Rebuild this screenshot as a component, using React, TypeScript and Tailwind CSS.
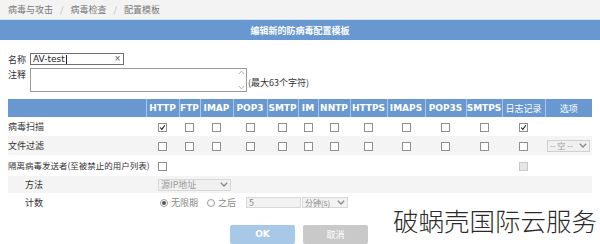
import React from 'react';

const protocols = ['HTTP', 'FTP', 'IMAP', 'POP3', 'SMTP', 'IM', 'NNTP', 'HTTPS', 'IMAPS', 'POP3S', 'SMTPS'];
const colWidths = [138, 33, 21, 33, 34, 31, 20, 32, 37, 38, 41, 36, 43, 47];

const rows = [
  { label: '病毒扫描', checks: [true, false, false, false, false, false, false, false, false, false, false], log: true, option: false, shade: false },
  { label: '文件过滤', checks: [false, false, false, false, false, false, false, false, false, false, false], log: false, option: true, shade: true },
];

function Box({ checked = false, disabled = false }: { checked?: boolean; disabled?: boolean }) {
  return (
    <span
      className={`inline-flex w-[9px] h-[9px] items-center justify-center border align-middle ${
        disabled ? 'border-[#c8c8c8] bg-[#e6e6e6]' : 'border-[#8f8f8f] bg-white'
      }`}
    >
      {checked && (
        <svg width="9" height="9" viewBox="0 0 9 9">
          <path d="M1.5 4.5 L3.6 6.8 L7.6 1.6" fill="none" stroke="#222" strokeWidth="1.4" />
        </svg>
      )}
    </span>
  );
}

function Chevron({ color = '#666' }: { color?: string }) {
  return (
    <svg width="8" height="5" viewBox="0 0 8 5">
      <path d="M0.8 0.8 L4 4 L7.2 0.8" fill="none" stroke={color} strokeWidth="1.3" />
    </svg>
  );
}

function Radio({ on = false }: { on?: boolean }) {
  return (
    <span className="inline-flex w-[8px] h-[8px] rounded-full border border-[#9a9a9a] bg-white items-center justify-center">
      {on && <span className="w-[4px] h-[4px] rounded-full bg-[#555]" />}
    </span>
  );
}

export default function App() {
  return (
    <div className="relative w-[600px] h-[244px] overflow-hidden bg-white text-[#333] font-['DejaVu_Sans','Noto_Sans_CJK_SC',sans-serif] text-[9px] leading-none">
      {/* Breadcrumb */}
      <div className="h-[19px] bg-[#f4f3f3] flex items-center gap-[7px] px-[8px] text-[#777] font-['Noto_Sans_CJK_SC',sans-serif]">
        <span>病毒与攻击</span>
        <span className="text-[#bbb]">/</span>
        <span>病毒检查</span>
        <span className="text-[#bbb]">/</span>
        <span>配置模板</span>
      </div>

      {/* Title band */}
      <div className="h-[1px] bg-[#cddff1]" />
      <div className="h-[20px] bg-[#6898cf] flex items-center justify-center text-white font-bold font-['Noto_Sans_CJK_SC',sans-serif]">
        编辑新的防病毒配置模板
      </div>

      {/* Form fields */}
      <div className="px-[8px] pt-[13px]">
        <div className="flex items-center h-[12px]">
          <span className="w-[22px] shrink-0 whitespace-nowrap font-['Noto_Sans_CJK_SC',sans-serif]">名称</span>
          <div className="w-[94px] h-[12px] border border-[#6f6f6f] bg-white flex items-center px-[2px]">
            <span className="text-[9px] text-[#222]">AV-test</span>
            <span className="w-[1px] h-[9px] bg-[#222] ml-[1px]" />
            <span className="ml-auto text-[8px] text-[#555]">×</span>
          </div>
        </div>
        <div className="flex items-start mt-[3px]">
          <span className="w-[22px] shrink-0 whitespace-nowrap pt-[2px] font-['Noto_Sans_CJK_SC',sans-serif]">注释</span>
          <div className="w-[217px] h-[24px] border border-[#9a9a9a] bg-white flex justify-end pr-[1px]">
            <div className="flex flex-col justify-between py-[1px]">
              <svg width="7" height="5" viewBox="0 0 7 5">
                <path d="M0.8 4 L3.5 1.2 L6.2 4" fill="none" stroke="#aaa" strokeWidth="1" />
              </svg>
              <svg width="7" height="5" viewBox="0 0 7 5">
                <path d="M0.8 1 L3.5 3.8 L6.2 1" fill="none" stroke="#aaa" strokeWidth="1" />
              </svg>
            </div>
          </div>
          <span className="self-end mb-[5px] ml-[1px] whitespace-nowrap font-['Noto_Sans_CJK_SC',sans-serif]">(最大63个字符)</span>
        </div>
      </div>

      {/* Protocol table */}
      <table className="ml-[8px] mt-[7px] table-fixed border-collapse w-[584px]">
        <colgroup>
          {colWidths.map((w, i) => (
            <col key={i} style={{ width: w }} />
          ))}
        </colgroup>
        <thead>
          <tr className="h-[18px] bg-[#6898cf] text-white font-bold">
            <th className="p-0" />
            {protocols.map((p) => (
              <th key={p} className="p-0 border-l border-[#a9c7e8] text-center font-bold">
                {p}
              </th>
            ))}
            <th className="p-0 border-l border-[#a9c7e8] font-['Noto_Sans_CJK_SC',sans-serif] font-normal">日志记录</th>
            <th className="p-0 border-l border-[#a9c7e8] font-['Noto_Sans_CJK_SC',sans-serif] font-normal">选项</th>
          </tr>
        </thead>
        <tbody className="font-['Noto_Sans_CJK_SC',sans-serif]">
          {rows.map((r) => (
            <tr key={r.label} className={`h-[19px] ${r.shade ? 'bg-[#f4f4f4]' : 'bg-white'}`}>
              <td className="p-0">{r.label}</td>
              {r.checks.map((c, i) => (
                <td key={i} className="p-0 text-center align-middle">
                  <Box checked={c} />
                </td>
              ))}
              <td className="p-0 text-center align-middle">
                <Box checked={r.log} />
              </td>
              <td className="p-0 align-middle">
                {r.option && (
                  <div className="mx-auto w-[43px] h-[12px] border border-[#d0d0d0] bg-[#f0f0f0] flex items-center justify-between px-[2px] text-[#999]">
                    <span className="text-[8px]">-- 空 --</span>
                    <Chevron color="#888" />
                  </div>
                )}
              </td>
            </tr>
          ))}
          <tr className="h-[21px]">
            <td className="p-0 whitespace-nowrap text-[8.5px]">隔离病毒发送者(至被禁止的用户列表)</td>
            <td className="p-0 text-center">
              <Box />
            </td>
            <td colSpan={10} className="p-0" />
            <td className="p-0 text-center">
              <Box disabled />
            </td>
            <td className="p-0" />
          </tr>
          <tr className="h-[17px] bg-[#f4f4f4]">
            <td className="p-0 pl-[17px]">方法</td>
            <td colSpan={13} className="p-0">
              <div className="ml-[12px] w-[73px] h-[12px] border border-[#d8d8d8] bg-[#f0f0f0] flex items-center justify-between px-[2px] text-[#999]">
                <span>源IP地址</span>
                <Chevron color="#888" />
              </div>
            </td>
          </tr>
          <tr className="h-[19px]">
            <td className="p-0 pl-[17px]">计数</td>
            <td colSpan={13} className="p-0">
              <div className="ml-[14px] flex items-center text-[#888]">
                <Radio on />
                <span className="ml-[3px]">无限期</span>
                <span className="ml-[9px] inline-flex">
                  <Radio />
                </span>
                <span className="ml-[3px]">之后</span>
                <div className="ml-[10px] w-[55px] h-[11px] border border-[#d8d8d8] bg-[#f2f2f2] flex items-center px-[2px]">
                  <span>5</span>
                </div>
                <div className="ml-[1px] w-[46px] h-[11px] border border-[#d8d8d8] bg-[#f2f2f2] flex items-center justify-between px-[2px]">
                  <span className="text-[8px]">分钟(s)</span>
                  <Chevron color="#888" />
                </div>
              </div>
            </td>
          </tr>
        </tbody>
      </table>

      {/* Buttons */}
      <div className="flex justify-center gap-[8px] mt-[13px]">
        <div className="ml-[-2px] w-[65px] h-[19px] rounded-[2px] bg-[#a8c8e8] text-white font-bold flex items-center justify-center">
          OK
        </div>
        <div className="w-[65px] h-[19px] rounded-[2px] bg-[#c9c9c9] text-white flex items-center justify-center font-['Noto_Sans_CJK_SC',sans-serif]">
          取消
        </div>
      </div>

      {/* Watermark */}
      <div className="absolute left-[393px] top-[207px] text-[25.5px] leading-none font-light text-[#2a2a2a] font-['Noto_Sans_CJK_SC',sans-serif]">
        破蜗壳国际云服务
      </div>
    </div>
  );
}
